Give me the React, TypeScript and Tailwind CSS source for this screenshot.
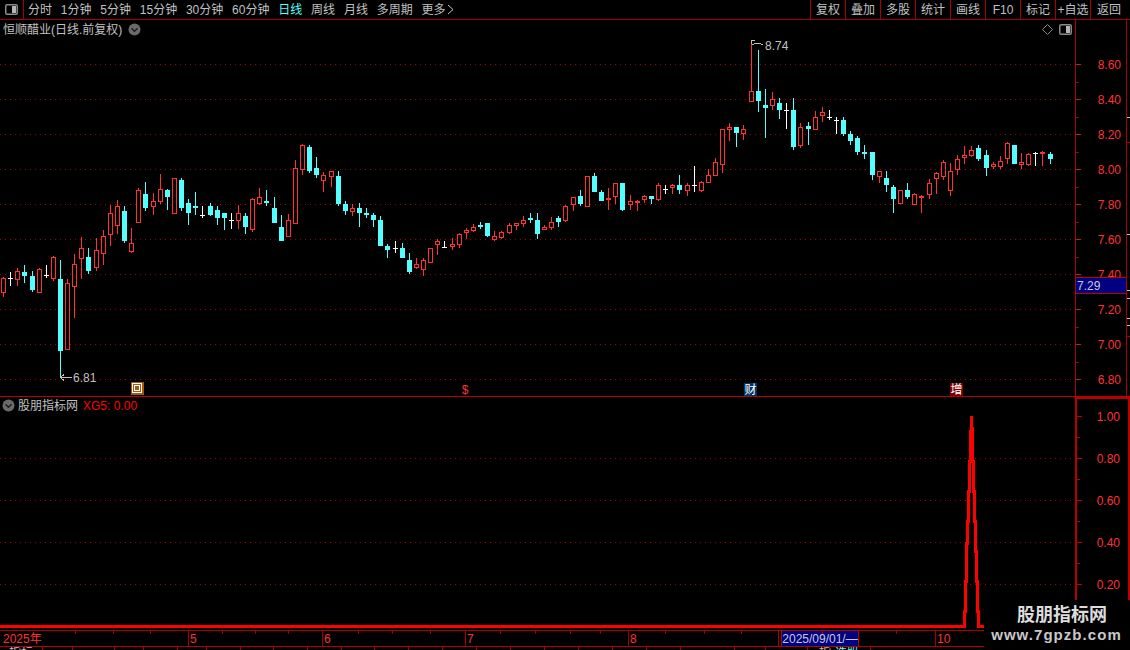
import React from "react";

type C = [number, number, number, number, number, "r" | "c" | "w"];

const g1: C[] = [
  [10,445,488,441,500,"r"],[31,445,445,426,468,"w"],[52,424,449,415,468,"r"],[73,426,438,405,459,"c"],[97,438,480,423,486,"c"],[118,418,488,415,488,"r"],[139,435,435,405,444,"w"],[160,382,446,378,453,"r"],
  [181,447,663,390,744,"c"],[202,460,660,447,660,"r"],[223,403,470,373,564,"r"],[244,355,386,321,447,"r"],[265,381,423,354,432,"c"],[289,361,413,324,423,"r"],[310,319,371,300,405,"r"],[331,250,314,225,348,"r"],[352,229,287,210,312,"r"],[373,243,333,228,339,"c"],[394,340,365,294,369,"r"],[415,181,278,175,278,"r"],[436,192,234,156,243,"c"],[460,214,230,190,255,"r"],[481,178,215,132,222,"r"],[502,180,201,177,240,"c"],[523,145,251,145,251,"r"],[544,150,234,144,243,"c"],[565,219,249,207,285,"c"],[586,228,234,186,255,"c"],[607,256,256,228,264,"w"],[631,228,255,220,258,"c"],[652,240,264,228,285,"c"],[673,249,264,249,300,"c"],[694,270,270,249,297,"w"],[715,250,272,225,297,"r"],[736,258,291,250,312,"c"],[757,208,300,205,306,"r"],[778,202,222,174,226,"r"],[799,213,219,180,228,"c"],
];
const g2: C[] = [
  [13,234,279,201,279,"c"],[34,291,333,255,333,"c"],[55,271,321,252,321,"r"],[76,115,281,90,281,"r"],[97,45,119,42,135,"r"],[118,51,123,45,129,"c"],[139,114,135,81,144,"c"],[160,136,152,126,186,"r"],[184,124,140,124,171,"r"],[205,138,222,123,228,"c"],[226,222,243,213,255,"c"],[247,235,246,222,258,"r"],[268,234,249,219,291,"c"],[289,249,255,234,264,"c"],[310,255,270,249,291,"c"],[331,270,348,258,348,"c"],[352,348,360,342,384,"c"],[375,355,355,333,369,"w"],[397,354,384,339,384,"c"],[418,390,426,369,432,"c"],[439,403,414,384,417,"r"],[460,391,419,384,438,"r"],[481,355,398,355,398,"r"],[502,334,344,327,375,"r"],[523,350,350,333,354,"w"],[547,343,350,324,360,"r"],[568,313,344,309,354,"r"],[589,301,308,294,327,"r"],[610,292,302,282,306,"r"],[631,285,291,276,297,"c"],[652,279,318,279,321,"c"],[673,319,329,303,333,"r"],[694,307,323,303,327,"r"],[718,286,308,279,312,"r"],[739,280,287,279,300,"r"],[760,270,281,258,291,"r"],[781,264,270,249,279,"c"],[802,270,312,249,327,"c"],
];
const g3: C[] = [
  [13,590,600,585,600,"r"],[34,577,594,561,600,"r"],[55,564,576,558,591,"c"],[76,529,572,526,576,"r"],[100,502,524,502,543,"r"],[121,498,522,480,528,"c"],[142,439,530,439,530,"r"],[163,438,486,429,486,"c"],[184,486,513,480,513,"c"],[205,503,510,474,540,"r"],[226,460,500,460,522,"r"],[247,459,540,459,543,"c"],[271,514,524,495,540,"r"],[292,514,520,510,543,"r"],[313,499,510,495,519,"r"],[334,499,507,499,522,"c"],[355,466,510,459,513,"r"],[375,477,477,465,492,"w"],[397,466,473,462,492,"r"],[418,465,480,435,492,"c"],[442,466,483,459,498,"r"],[463,466,466,408,486,"w"],[484,457,483,454,486,"r"],[505,436,458,418,458,"r"],[526,397,437,385,437,"r"],[547,298,404,298,429,"r"],[568,292,299,279,333,"r"],[589,292,309,292,351,"c"],[610,298,312,285,330,"r"],[634,184,215,30,184,"r"],[655,184,213,60,246,"c"],[676,225,234,177,324,"c"],[697,208,227,186,240,"r"],[718,219,240,204,267,"c"],[739,241,241,219,297,"w"],[760,240,351,204,360,"c"],[781,292,348,279,354,"r"],[805,288,297,276,345,"c"],
];
const g4: C[] = [
  [16,82,120,63,120,"r"],[37,67,77,52,96,"r"],[58,82,82,60,90,"w"],[79,90,90,82,132,"w"],[100,90,132,81,138,"c"],[121,132,153,123,165,"c"],[142,144,186,138,195,"c"],[163,186,192,165,207,"c"],[187,186,255,186,270,"c"],[208,243,261,243,279,"r"],[229,264,285,243,306,"c"],[250,291,327,285,369,"c"],[271,301,342,301,342,"r"],[292,300,321,279,327,"c"],[313,313,345,310,345,"r"],[334,319,323,316,369,"r"],[358,280,315,267,327,"r"],[379,250,266,246,312,"r"],[400,216,260,210,270,"r"],[421,244,303,219,318,"r"],[442,208,239,195,255,"r"],[463,196,203,168,222,"r"],[484,181,198,168,201,"r"],[505,174,207,165,213,"c"],[529,195,234,180,258,"c"],[550,223,230,216,237,"r"],[571,214,232,198,237,"r"],[592,160,208,156,222,"r"],[613,165,222,165,222,"c"],[634,217,224,189,237,"r"],[655,192,225,189,228,"r"],[676,189,189,186,228,"w"],[697,187,193,184,228,"r"],[721,192,207,186,222,"c"],
];

const RED = "#ff3232";
const CYAN = "#54ffff";
const LINE = "#a80000";
const GRID = "#a00000";

function Candle({ c, ox, oy }: { c: C; ox: number; oy: number }) {
  const [x, t, b, wt, wb, k] = c;
  const cx = Math.floor(x / 3) + ox;
  const top = Math.round(t / 3) + oy;
  const bot = Math.round(b / 3) + oy;
  const wickT = Math.round(wt / 3) + oy;
  const wickB = Math.round(wb / 3) + oy;
  const col = k === "r" ? RED : k === "c" ? CYAN : "#ffffff";
  return (
    <g>
      <rect x={cx} y={wickT} width={1} height={Math.max(1, wickB - wickT)} fill={col} />
      {k === "w" && <rect x={cx - 2} y={top} width={5} height={1} fill={col} />}
      {k === "c" && <rect x={cx - 2} y={top} width={5} height={Math.max(1, bot - top)} fill={col} />}
      {k === "r" && <rect x={cx - 1.5} y={top + 0.5} width={4} height={Math.max(1, bot - top - 1)} fill="#000" stroke={col} strokeWidth={1} />}
    </g>
  );
}

function CircleChevron() {
  return (
    <svg width="13" height="13" viewBox="0 0 13 13" className="block">
      <circle cx="6.5" cy="6.5" r="6" fill="#6a6a6a" />
      <path d="M3.5 5.2 L6.5 8.2 L9.5 5.2" fill="none" stroke="#1c1c1c" strokeWidth="1.4" />
    </svg>
  );
}

function PanelIcon() {
  return (
    <svg width="13" height="11" viewBox="0 0 13 11" className="block">
      <rect x="0.75" y="0.75" width="11.5" height="9.5" rx="1.5" fill="#000" stroke="#8a8a8a" strokeWidth="1.5" />
      <rect x="7" y="2" width="4" height="7" fill="#b5b5b5" />
    </svg>
  );
}

const mainLevels = ["8.60","8.40","8.20","8.00","7.80","7.60","7.40","7.20","7.00","6.80"];
const subLevels = ["1.00","0.80","0.60","0.40","0.20"];
const leftTabs = ["分时","1分钟","5分钟","15分钟","30分钟","60分钟","日线","周线","月线","多周期"];
const rightTabs = ["复权","叠加","多股","统计","画线","F10","标记","+自选"];
const dateTicks = [75,113,150,222,255,288,358,392,430,500,535,570,600,665,704,741,822,896];
const tabWidths = [43,30,42,29,34,29,34,33,34,34,33,34,34,34,34,34,34,34,34,34,54,31,42,63];
const dateCells = [
  { t: "2025年", w: 188 },
  { t: "5", w: 134 },
  { t: "6", w: 143 },
  { t: "7", w: 163 },
  { t: "8", w: 150 },
];

function Spike() {
  const pts = (arr: number[][]) => arr.map(([x, y]) => `${x / 3 + 940},${y / 3 + 400}`).join(" ");
  const left = [[-2820,680],[72,680],[72,635],[75,635],[75,545],[79,545],[79,430],[82,430],[82,365],[85,365],[85,275],[89,275],[89,185],[92,185],[92,95],[94,95],[94,48]];
  const right = [[94,48],[97,95],[97,185],[100,185],[100,275],[104,275],[104,365],[107,365],[107,455],[110,455],[110,545],[113,545],[113,635],[116,635],[116,680],[132,680]];
  return (
    <g fill="none" stroke="#ff0000" strokeWidth="3">
      <polyline points={pts(left)} />
      <polyline points={pts(right)} />
    </g>
  );
}

export default function App() {
  return (
    <div className="relative w-[1130px] h-[650px] overflow-hidden bg-black text-[12px] leading-none text-[#c0c0c0] font-['Liberation_Sans','Noto_Sans_CJK_SC',sans-serif]">
      {/* top bar */}
      <div className="flex h-[20px] items-center border-b border-[#a80000]">
        <div className="flex h-full w-[24px] items-center justify-center border-r border-[#a80000]">
          <PanelIcon />
        </div>
        <div className="ml-[4px] flex gap-[8.8px]">
          {leftTabs.map((t) => (
            <span key={t} className={t === "日线" ? "text-[#54ffff]" : ""}>{t}</span>
          ))}
          <span className="flex items-center gap-[-1px]">
            更多
            <svg width="8" height="11" viewBox="0 0 8 11"><path d="M2 1 L7 5.5 L2 10" fill="none" stroke="#c0c0c0" /></svg>
          </span>
        </div>
        <div className="ml-auto flex h-full">
          {rightTabs.map((t) => (
            <div key={t} className="flex h-full w-[35px] items-center justify-center border-l border-[#a80000]">{t}</div>
          ))}
          <div className="flex h-full w-[40px] items-center border-l border-[#a80000] pl-[6px]">返回</div>
        </div>
      </div>

      {/* main chart */}
      <div className="flex h-[377px] border-b border-[#b80000]">
        <div className="relative w-[1075px]">
          <svg width="1075" height="376" viewBox="0 20 1075 376" className="block" shapeRendering="crispEdges">
            {mainLevels.map((_, i) => (
              <line key={i} x1="0" x2="1075" y1={64.5 + 35 * i} y2={64.5 + 35 * i} stroke={GRID} strokeDasharray="1 4" />
            ))}
            {g1.map((c, i) => <Candle key={i} c={c} ox={0} oy={130} />)}
            {g2.map((c, i) => <Candle key={i} c={c} ox={270} oy={130} />)}
            {g3.map((c, i) => <Candle key={i} c={c} ox={540} oy={30} />)}
            {g4.map((c, i) => <Candle key={i} c={c} ox={810} oy={90} />)}
            <path d="M751.5 44 V40.5 H755 M752 44.5 L757 43 L763 44.5" fill="none" stroke="#c0c0c0" />
            <path d="M60.5 377.5 H72 M60.5 377.5 L64 374.5 M60.5 377.5 L64 380.5" fill="none" stroke="#c0c0c0" />
            <rect x="131" y="382" width="13" height="13" fill="#a5590c" />
            <rect x="132.5" y="383.5" width="9" height="9" fill="none" stroke="#fff" />
            <rect x="134.5" y="385.5" width="5" height="5" fill="none" stroke="#fff" />
          </svg>

          <div className="absolute left-[3px] top-[3px] flex items-center gap-[6px]">
            <span>恒顺醋业(日线.前复权)</span>
            <CircleChevron />
          </div>
          <div className="absolute right-[3px] top-[4px] flex items-center gap-[6px]">
            <svg width="11" height="11" viewBox="0 0 11 11"><path d="M5.5 0.5 L10.5 5.5 L5.5 10.5 L0.5 5.5 Z" fill="none" stroke="#8a8a8a" /></svg>
            <PanelIcon />
          </div>
          <span className="absolute left-[765px] top-[20px]">8.74</span>
          <span className="absolute left-[73px] top-[352px]">6.81</span>
          <span className="absolute left-[460px] top-[363px] flex h-[13px] w-[10px] items-center justify-center text-[#ff3232]">$</span>
          <span className="absolute left-[744px] top-[363px] flex h-[13px] w-[13px] items-center justify-center bg-[#003366] text-white">财</span>
          <span className="absolute left-[950px] top-[363px] flex h-[13px] w-[13px] items-center justify-center bg-[#800000] text-white">增</span>
        </div>

        <div className="relative w-[55px] border-l border-[#b00000]">
          <svg width="54" height="376" viewBox="1076 20 54 376" className="block" shapeRendering="crispEdges">
            <line x1="1126.5" x2="1126.5" y1="20" y2="396" stroke={LINE} />
            {mainLevels.map((_, i) => (
              <g key={i}>
                <line x1="1075" x2="1081" y1={64.5 + 35 * i} y2={64.5 + 35 * i} stroke="#c81e1e" />
                <line x1="1075" x2="1079" y1={82.5 + 35 * i} y2={82.5 + 35 * i} stroke={LINE} />
              </g>
            ))}
            <line x1="1126" x2="1130" y1="142.5" y2="142.5" stroke={LINE} />
            <line x1="1126" x2="1130" y1="336.5" y2="336.5" stroke={LINE} />
            {[117,234,290,298,318,325].map((y) => (
              <line key={y} x1="1127" x2="1130" y1={y + 0.5} y2={y + 0.5} stroke="#c0c0c0" />
            ))}
            {mainLevels.map((t, i) => (
              <text key={t} x="1121" y={69 + 35 * i} textAnchor="end" fill={RED} fontSize="12" shapeRendering="auto">{t}</text>
            ))}
          </svg>
          <div className="absolute left-0 top-[257px] flex h-[17px] w-[50px] items-center border-y border-[#c00000] bg-[#000080] pl-[1px] text-[#c8c8d8]">7.29</div>
        </div>
      </div>

      {/* sub chart */}
      <div className="flex h-[234px] border-b border-[#b00000]">
        <div className="relative w-[1075px]">
          <svg width="1075" height="233" viewBox="0 397 1075 233" className="block" shapeRendering="crispEdges">
            {subLevels.slice(1).map((_, i) => (
              <line key={i} x1="0" x2="1075" y1={458.5 + 42 * i} y2={458.5 + 42 * i} stroke={GRID} strokeDasharray="1 4" />
            ))}
            <Spike />
          </svg>
          <div className="absolute left-[2px] top-[2px] flex items-center gap-[3px]">
            <CircleChevron />
            <span>股朋指标网</span>
            <span className="ml-[2px] text-[#ff0000]">XG5: 0.00</span>
          </div>
        </div>
        <div className="relative w-[55px] border-x-2 border-t-2 border-[#b80000]">
          <svg width="51" height="231" viewBox="1077 399 51 231" className="block" shapeRendering="crispEdges">
            {subLevels.map((_, i) => (
              <g key={i}>
                <line x1="1075" x2="1082" y1={416.5 + 42 * i} y2={416.5 + 42 * i} stroke="#b80000" />
                <line x1="1075" x2="1080" y1={437.5 + 42 * i} y2={437.5 + 42 * i} stroke="#b80000" />
              </g>
            ))}
            {subLevels.map((t, i) => (
              <text key={t} x="1120" y={420.5 + 42 * i} textAnchor="end" fill={RED} fontSize="12" shapeRendering="auto">{t}</text>
            ))}
          </svg>
        </div>
      </div>

      {/* date axis */}
      <div className="relative flex h-[16px] border-b border-[#b80000] text-[#ff3232]">
        {dateCells.map((c, i) => (
          <div
            key={c.t}
            style={{ width: c.w }}
            className={i === 0 ? "flex items-center pl-[3px]" : "flex items-center border-l border-[#a80000] pl-[1px]"}
          >
            {c.t}
          </div>
        ))}
        <div className="flex w-[157px] border-l border-[#a80000] pl-[2px]">
          <div className="flex h-[15px] w-[78px] items-center justify-center border-x border-[#c00000] bg-[#000080] text-[#c8c8d8]">2025/09/01/—</div>
        </div>
        <div className="flex flex-1 items-center border-l border-[#a80000] pl-[1px]">10</div>
        <svg width="1130" height="3" className="pointer-events-none absolute left-0 top-0" shapeRendering="crispEdges">
          {dateTicks.map((x) => (
            <line key={x} x1={x + 0.5} x2={x + 0.5} y1="0" y2="3" stroke="#a80000" />
          ))}
        </svg>
      </div>

      {/* clipped tab strip */}
      <div className="flex h-[3px] overflow-hidden">
        {tabWidths.map((w, i) => (
          <div key={i} style={{ width: w }} className="flex shrink-0 justify-center gap-[4px] border-r border-[#a80000]">
            {i === 0 && <span>指标</span>}
            {i === 23 && <span>指</span>}
            {i === 23 && <span className="text-[#54ffff]">选股</span>}
          </div>
        ))}
      </div>

      {/* watermark */}
      <div className="absolute left-[984px] top-[600px] flex h-[50px] w-[146px] flex-col items-center bg-black pt-[5px] text-[#dcdcdc]">
        <span className="ml-[10px] text-[18px] font-bold leading-[20px]">股朋指标网</span>
        <span className="ml-[-1px] mt-[1px] text-[15px] font-bold leading-[17px] tracking-[1.05px] text-[#c8c8c8]">www.7gpzb.com</span>
      </div>
    </div>
  );
}
